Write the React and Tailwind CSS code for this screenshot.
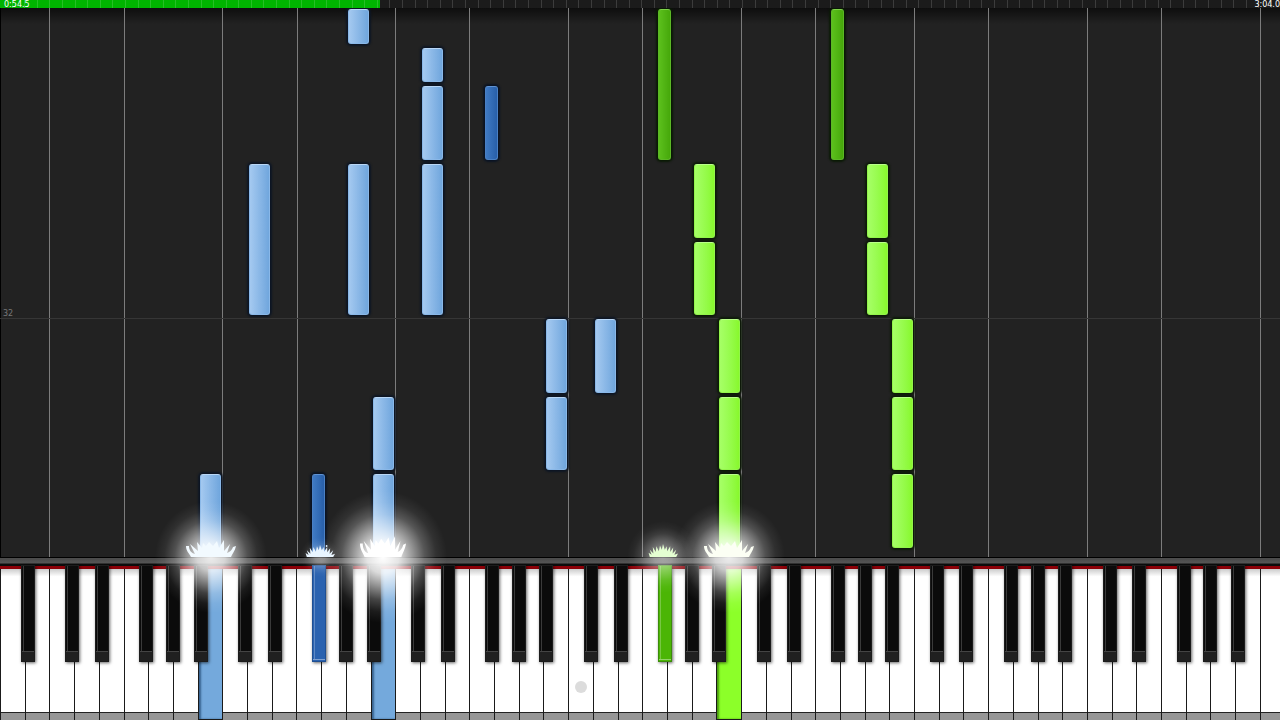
import React from 'react';

// 51.8 white keys fit across the window, the last one runs off the edge
const KEY = 100 / 51.8;
const BEAT = 14.13;
const BAR_LINE = 56.5;

const NAMES = ['A', 'B', 'C', 'D', 'E', 'F', 'G'];
// how far each black key reaches left of the white key it belongs to
const BLACK = { B: '-left-[4px]', D: '-left-[9px]', E: '-left-[4px]', G: '-left-[9px]', A: '-left-[7px]' };
const GUIDES = [2, 5, 9, 12, 16, 19, 23, 26, 30, 33, 37, 40, 44, 47, 51];

const keys = Array.from({ length: 52 }, (_, i) => {
  const name = NAMES[i % 7];
  return { i, name, black: i === 0 ? null : BLACK[name] };
});

const pressedWhite = { 8: 'blue', 15: 'blue', 29: 'green' };
const pressedBlack = { 13: 'blue', 27: 'green' };

const notes = [
  { key: 14, at: -4, len: 0.5, hand: 'blue' },
  { key: 17, at: -3.5, len: 0.5, hand: 'blue' },
  { key: 17, at: -3, len: 1, hand: 'blue' },
  { key: 17, at: -2, len: 2, hand: 'blue' },
  { key: 20, at: -3, len: 1, hand: 'blue', black: true },
  { key: 10, at: -2, len: 2, hand: 'blue' },
  { key: 14, at: -2, len: 2, hand: 'blue' },
  { key: 22, at: 0, len: 1, hand: 'blue' },
  { key: 22, at: 1, len: 1, hand: 'blue' },
  { key: 24, at: 0, len: 1, hand: 'blue' },
  { key: 15, at: 1, len: 1, hand: 'blue' },
  { key: 15, at: 2, len: 2, hand: 'blue' },
  { key: 8, at: 2, len: 2, hand: 'blue' },
  { key: 13, at: 2, len: 2, hand: 'blue', black: true },
  { key: 27, at: -4, len: 2, hand: 'green', black: true },
  { key: 34, at: -4, len: 2, hand: 'green', black: true },
  { key: 28, at: -2, len: 1, hand: 'green' },
  { key: 28, at: -1, len: 1, hand: 'green' },
  { key: 35, at: -2, len: 1, hand: 'green' },
  { key: 35, at: -1, len: 1, hand: 'green' },
  { key: 29, at: 0, len: 1, hand: 'green' },
  { key: 29, at: 1, len: 1, hand: 'green' },
  { key: 29, at: 2, len: 2, hand: 'green' },
  { key: 36, at: 0, len: 1, hand: 'green' },
  { key: 36, at: 1, len: 1, hand: 'green' },
  { key: 36, at: 2, len: 1, hand: 'green' },
];

const noteColors = {
  blue: 'ml-[2px] w-[21px] from-[#a4c9f0] to-[#70a6dd] border-[#8ab8e8] border-t-[#b9d7f6] shadow-[0_0_2px_2px_#0d1624]',
  green: 'ml-[2px] w-[21px] from-[#a6ff66] to-[#88f82c] border-[#93f44b] border-t-[#baff8a] shadow-[0_0_2px_2px_#0d1a08]',
  blueBlack: '-ml-[9px] w-[13px] from-[#3f7ac4] to-[#285fa9] border-[#4a80c4] border-t-[#5f93d4] shadow-[0_0_2px_2px_#0a1424]',
  greenBlack: '-ml-[9px] w-[13px] from-[#5cc01c] to-[#46a80a] border-[#5cb826] border-t-[#7fd449] shadow-[0_0_2px_2px_#0a1a05]',
};

function Note({ note }) {
  const color = noteColors[note.black ? note.hand + 'Black' : note.hand];
  return (
    <div
      className={`absolute mt-px rounded-[3px] border bg-linear-to-r ${color}`}
      style={{
        left: `${note.key * KEY}%`,
        top: `${BAR_LINE + note.at * BEAT}%`,
        height: `calc(${note.len * BEAT}% - 4px)`,
      }}
    />
  );
}

function ProgressBar() {
  return (
    <div className="relative h-2 shrink-0 overflow-hidden bg-[#1b1b1b]" role="progressbar" aria-label="Song position" aria-valuenow={54.5} aria-valuemax={184}>
      <div className="h-full w-[29.7%] bg-[#00b400]" />
      <div className="absolute inset-0 flex">
        {Array.from({ length: 102 }, (_, i) => (
          <div key={i} className="h-full w-[0.984%] shrink-0 border-r border-white/15" />
        ))}
      </div>
      <div className="absolute inset-0 flex justify-between pl-1 text-[8px] leading-[9px] text-white">
        <span>0:54.5</span>
        <span>3:04.0</span>
      </div>
    </div>
  );
}

function Roll() {
  return (
    <div className="relative flex-1 overflow-hidden bg-[#222222]">
      <div className="absolute inset-y-0 left-0 w-px bg-black" />
      <div className="absolute inset-x-0 top-0 h-4 bg-linear-to-b from-black/60 to-transparent" />
      {GUIDES.map(g => (
        <div key={g} className="absolute inset-y-0 w-px bg-[#7c7c7c]" style={{ left: `${g * KEY}%` }} />
      ))}
      <div className="absolute inset-x-0 top-[56.5%] h-px bg-[#363636]" />
      <span className="absolute bottom-[43.5%] left-[3px] text-[8px] leading-[8px] text-[#777777]">32</span>
      {notes.map((n, i) => <Note key={i} note={n} />)}
    </div>
  );
}

function Key({ k }) {
  const white = pressedWhite[k.i];
  const dark = pressedBlack[k.i];
  let whiteColor = 'bg-linear-to-b from-[#cccccc] from-0% via-white via-5% to-white';
  if (white === 'blue') whiteColor = 'border-b bg-[#74a9dc] shadow-[inset_2px_0_2px_#38638f]';
  if (white === 'green') whiteColor = 'border-b bg-[#8cff29] shadow-[inset_2px_0_2px_#4a9a10]';
  let blackColor = 'border-[#1c1c1c] bg-[#0b0b0b]';
  if (dark === 'blue') blackColor = 'border-[#1f4f92] bg-[#2a62af]';
  if (dark === 'green') blackColor = 'border-[#3c8c0a] bg-[#4bb505]';

  return (
    <div className="relative h-full shrink-0" style={{ width: `${KEY}%` }}>
      <button
        type="button"
        aria-label={`${k.name} ${k.i}`}
        className={`flex h-full w-full flex-col justify-end border-l border-[#1a1a1a] ${whiteColor}`}
      >
        {!white && <span className="block h-2 w-full border-t border-[#222222] bg-[#969696]" />}
      </button>
      {k.black && (
        <button
          type="button"
          aria-label={`${k.name} flat ${k.i}`}
          className={`absolute -top-[4px] z-10 flex h-[97px] w-[14px] flex-col justify-end border shadow-[1px_1px_3px_#00000099] ${k.black} ${blackColor}`}
        >
          <span className={`ml-px block w-px flex-1 ${dark ? 'bg-white/25' : 'bg-[#3a3a3a]'}`} />
          <span className={`block w-full border-t ${dark ? 'h-[2px] border-white/40' : 'h-[10px] border-[#444444] bg-[#202020]'}`} />
        </button>
      )}
    </div>
  );
}

const bursts = [
  { key: 8.55, size: 'big', fill: '#f2faff' },
  { key: 12.95, size: 'small', fill: '#e8f5ff' },
  { key: 15.5, size: 'huge', fill: '#ffffff' },
  { key: 26.85, size: 'medium', fill: '#e4ffd2' },
  { key: 29.5, size: 'big', fill: '#fcfff4' },
];

const glowSizes = {
  small: 'h-[40px] w-[40px] opacity-40',
  medium: 'h-[72px] w-[72px] opacity-50',
  big: 'h-[112px] w-[112px] opacity-90',
  huge: 'h-[132px] w-[128px]',
};

const splashSizes = {
  small: 'w-[30px] h-[12px]',
  medium: 'w-[30px] h-[13px]',
  big: 'w-[50px] h-[18px]',
  huge: 'w-[46px] h-[22px]',
};

const CLUSTER = 'M3 18 L1 12 L6 15 L3 8 L9 13 L8 4 L13 11 L14 3 L18 10 L20 2 L23 8 L25 0 L28 8 L31 3 L32 10 L37 3 L37 11 L42 5 L41 13 L47 8 L44 15 L50 13 L47 18 Z';
const CROWN = 'M5 18 C3 14 0 12 0 7 L3 7 C3 11 5 14 9 15 L4 5 L12 12 L11 3 L16 9 L17 4 L20 7 L23 3 L27 7 L31 2 L33 9 L38 1 L38 12 L44 5 L41 14 C44 13 46 11 47 8 L50 7 C49 12 46 15 45 18 Z';

function Burst({ burst }) {
  const small = burst.size === 'small' || burst.size === 'medium';
  return (
    <div className="absolute bottom-0" style={{ left: `${burst.key * KEY}%` }}>
      <div
        className={`absolute -translate-x-1/2 -translate-y-1/2 rounded-full bg-[radial-gradient(closest-side,#ffffff_0%,#ffffffd9_25%,#ffffff8c_45%,#ffffff3d_65%,#ffffff12_83%,transparent_100%)] ${glowSizes[burst.size]}`}
      />
      <svg viewBox="0 0 50 18" preserveAspectRatio="none" className={`absolute bottom-0 -translate-x-1/2 ${splashSizes[burst.size]}`} fill={burst.fill} aria-hidden="true">
        <path d={small ? CLUSTER : CROWN} />
        {burst.size === 'small' && <circle cx="36" cy="1.5" r="1.5" />}
      </svg>
    </div>
  );
}

export default function App() {
  return (
    <div className="flex h-screen flex-col overflow-hidden bg-black font-['DejaVu_Sans',sans-serif]">
      <ProgressBar />
      <Roll />
      <div className="relative z-20 h-0">
        {bursts.map(b => <Burst key={b.key} burst={b} />)}
      </div>
      <div className="h-[9px] shrink-0 border-t border-black bg-linear-to-b from-[#4c4c4c] from-20% via-[#555555] via-60% to-[#0c0c0c] to-80%" />
      <div className="h-[3px] shrink-0 bg-[#8c0008]" />
      <div className="relative flex h-[151px] shrink-0">
        {keys.map(k => <Key key={k.i} k={k} />)}
        <div className="absolute top-[112px] left-[44.9%] size-3 rounded-full bg-[#dcdcdc]" />
      </div>
    </div>
  );
}
